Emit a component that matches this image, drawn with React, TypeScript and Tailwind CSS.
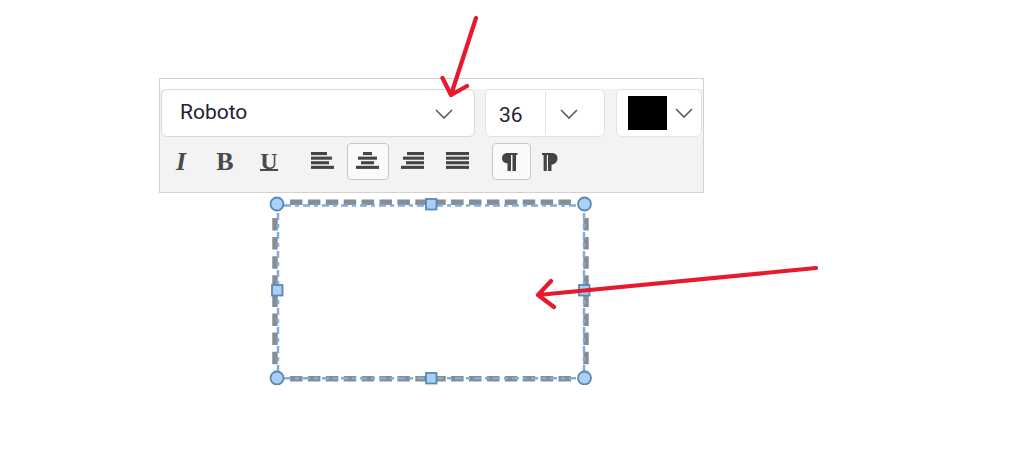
import type { ReactNode } from "react";

const chevron = (
  <svg viewBox="0 0 18 10" className="h-[10px] w-[18px]" fill="none" stroke="#56606e" strokeWidth="1.7">
    <path d="M1 1 L9 9 L17 1" />
  </svg>
);

const alignments = [
  { name: "Align left", bars: [[0, 16], [0, 21], [0, 18], [0, 23]] },
  { name: "Align center", bars: [[7, 9], [2, 19], [5, 13], [0, 23]] },
  { name: "Align right", bars: [[6, 17], [2, 21], [5, 18], [0, 23]] },
  { name: "Justify", bars: [[0, 23], [0, 23], [0, 23], [0, 23]] },
];

function ToolButton({ label, active, className, children }: { label: string; active?: boolean; className: string; children: ReactNode }) {
  return (
    <button
      type="button"
      aria-label={label}
      aria-pressed={!!active}
      className={`flex h-[37px] items-center justify-center rounded border ${
        active ? "border-[#c8c8c8] bg-[#fafafa]" : "border-transparent"
      } ${className}`}
    >
      {children}
    </button>
  );
}

function Toolbar() {
  return (
    <div className="w-full max-w-[545px] border border-[#d2d2d2] bg-[#f3f3f3] text-[#4a4a4a]">
      <div className="h-[10px] bg-white" />
      <div className="flex px-px font-[Roboto,sans-serif] text-[21px] text-[#1f2230]">
        <div className="relative mr-[10px] h-12 flex-1">
          <select
            aria-label="Font family"
            className="h-full w-full appearance-none rounded-md border border-[#d8d8d8] bg-white pr-12 pl-[18px]"
          >
            <option>Roboto</option>
          </select>
          <span className="pointer-events-none absolute top-5 right-[22px]">{chevron}</span>
        </div>
        <div className="mr-[11px] flex h-12 w-[120px] rounded-md border border-[#dfe2e8] bg-white">
          <input aria-label="Font size" defaultValue="36" className="my-0.5 w-[60px] border-r border-[#dfe2e8] pt-1.5 pl-[13px]" />
          <button type="button" aria-label="Choose font size" className="flex flex-1 items-center pt-px pl-[14px]">
            {chevron}
          </button>
        </div>
        <button
          type="button"
          aria-label="Text color"
          className="flex h-12 w-[86px] items-center rounded-md border border-[#e6e3e5] bg-white pl-[11px]"
        >
          <span className="mr-2 h-[34px] w-[39px] bg-black" />
          {chevron}
        </button>
      </div>
      <div className="flex gap-[13px] px-px pt-[6px] pb-[12px]">
        <div className="flex gap-1 font-['Liberation_Serif',serif] text-[26px] leading-none font-bold">
          <ToolButton label="Italic" className="w-10">
            <span className="italic">I</span>
          </ToolButton>
          <ToolButton label="Bold" className="w-10">
            B
          </ToolButton>
          <ToolButton label="Underline" className="w-10">
            <span className="h-[19px] border-b-2 border-[#4a4a4a] text-2xl leading-[18px]">U</span>
          </ToolButton>
        </div>
        <div className="flex gap-[3px]">
          {alignments.map(({ name, bars }) => (
            <ToolButton key={name} label={name} active={name === "Align center"} className="w-[42px] pr-0.5 pb-0.5">
              <svg viewBox="0 0 23 17" className="h-[17px] w-[23px]" fill="#444">
                {bars.map(([x, width], i) => (
                  <rect key={i} x={x} y={i * 4.6} width={width} height="3.1" />
                ))}
              </svg>
            </ToolButton>
          ))}
        </div>
        <div className="flex">
          <ToolButton label="Left to right" active className="w-[39px] pr-1">
            <svg viewBox="0 0 16 18" className="h-[18px] w-4" fill="#444">
              <path d="M15.500 0H6C2 0 0 2.200 0 5.300S2.500 10.500 5.500 10.500V18H9V2H10.500V18H14V2H15.500Z" />
            </svg>
          </ToolButton>
          <ToolButton label="Right to left" className="w-[37px]">
            <svg viewBox="0 0 16 18" className="h-[18px] w-4" fill="#444">
              <path d="M0 0H9.500C13.500 0 15.500 2.200 15.500 5.500S13 11.500 9.500 11.500V18H6V2H4.800V18H1.600V2H0Z" />
            </svg>
          </ToolButton>
        </div>
      </div>
    </div>
  );
}

function SelectedShape() {
  return (
    <svg viewBox="0 0 328 192" className="h-[192px] w-[328px]" fill="none">
      <g stroke="#858e97" strokeWidth="5.500">
        <path d="M22 9.300H308" strokeDasharray="12.500 5.400" />
        <path d="M22 185.700H308" strokeDasharray="12.500 5.400" />
        <path d="M7 25V178" strokeDasharray="12.500 6.600" />
        <path d="M318 25V178" strokeDasharray="12.500 6.600" />
      </g>
      <g stroke="#82addb" strokeWidth="2.500" strokeDasharray="7 4 4 4">
        <path d="M16 12.500H310" />
        <path d="M16 185.200H310" />
        <path d="M10 20V178" />
        <path d="M316 20V178" />
      </g>
      <g fill="#a8d0f8" stroke="#5d87b0" strokeWidth="1.800">
        <circle cx="9" cy="11" r="6.500" />
        <circle cx="316.500" cy="11" r="6.500" />
        <circle cx="9" cy="185" r="6.500" />
        <circle cx="316.500" cy="185" r="6.500" />
        <rect x="158" y="6" width="10.500" height="10.500" />
        <rect x="158" y="180" width="10.500" height="10.500" />
        <rect x="4" y="92" width="10.500" height="10.500" />
        <rect x="311" y="92" width="10.500" height="10.500" />
      </g>
    </svg>
  );
}

function Arrows() {
  return (
    <svg
      viewBox="0 0 380 300"
      className="pointer-events-none absolute top-[10px] left-[440px] h-[300px] w-[380px]"
      fill="none"
      stroke="#e7192d"
      strokeWidth="4.200"
      strokeLinecap="round"
      strokeLinejoin="round"
    >
      <path d="M36 8L11 85M2.500 68L11 85L27 76" />
      <path d="M376 258L98 285M111 271L98 285L114 297" />
    </svg>
  );
}

export default function App() {
  return (
    <main className="relative min-h-screen bg-white pt-[78px] pl-[159px]">
      <Toolbar />
      <div className="flex w-full max-w-[545px] justify-center">
        <SelectedShape />
      </div>
      <Arrows />
    </main>
  );
}
